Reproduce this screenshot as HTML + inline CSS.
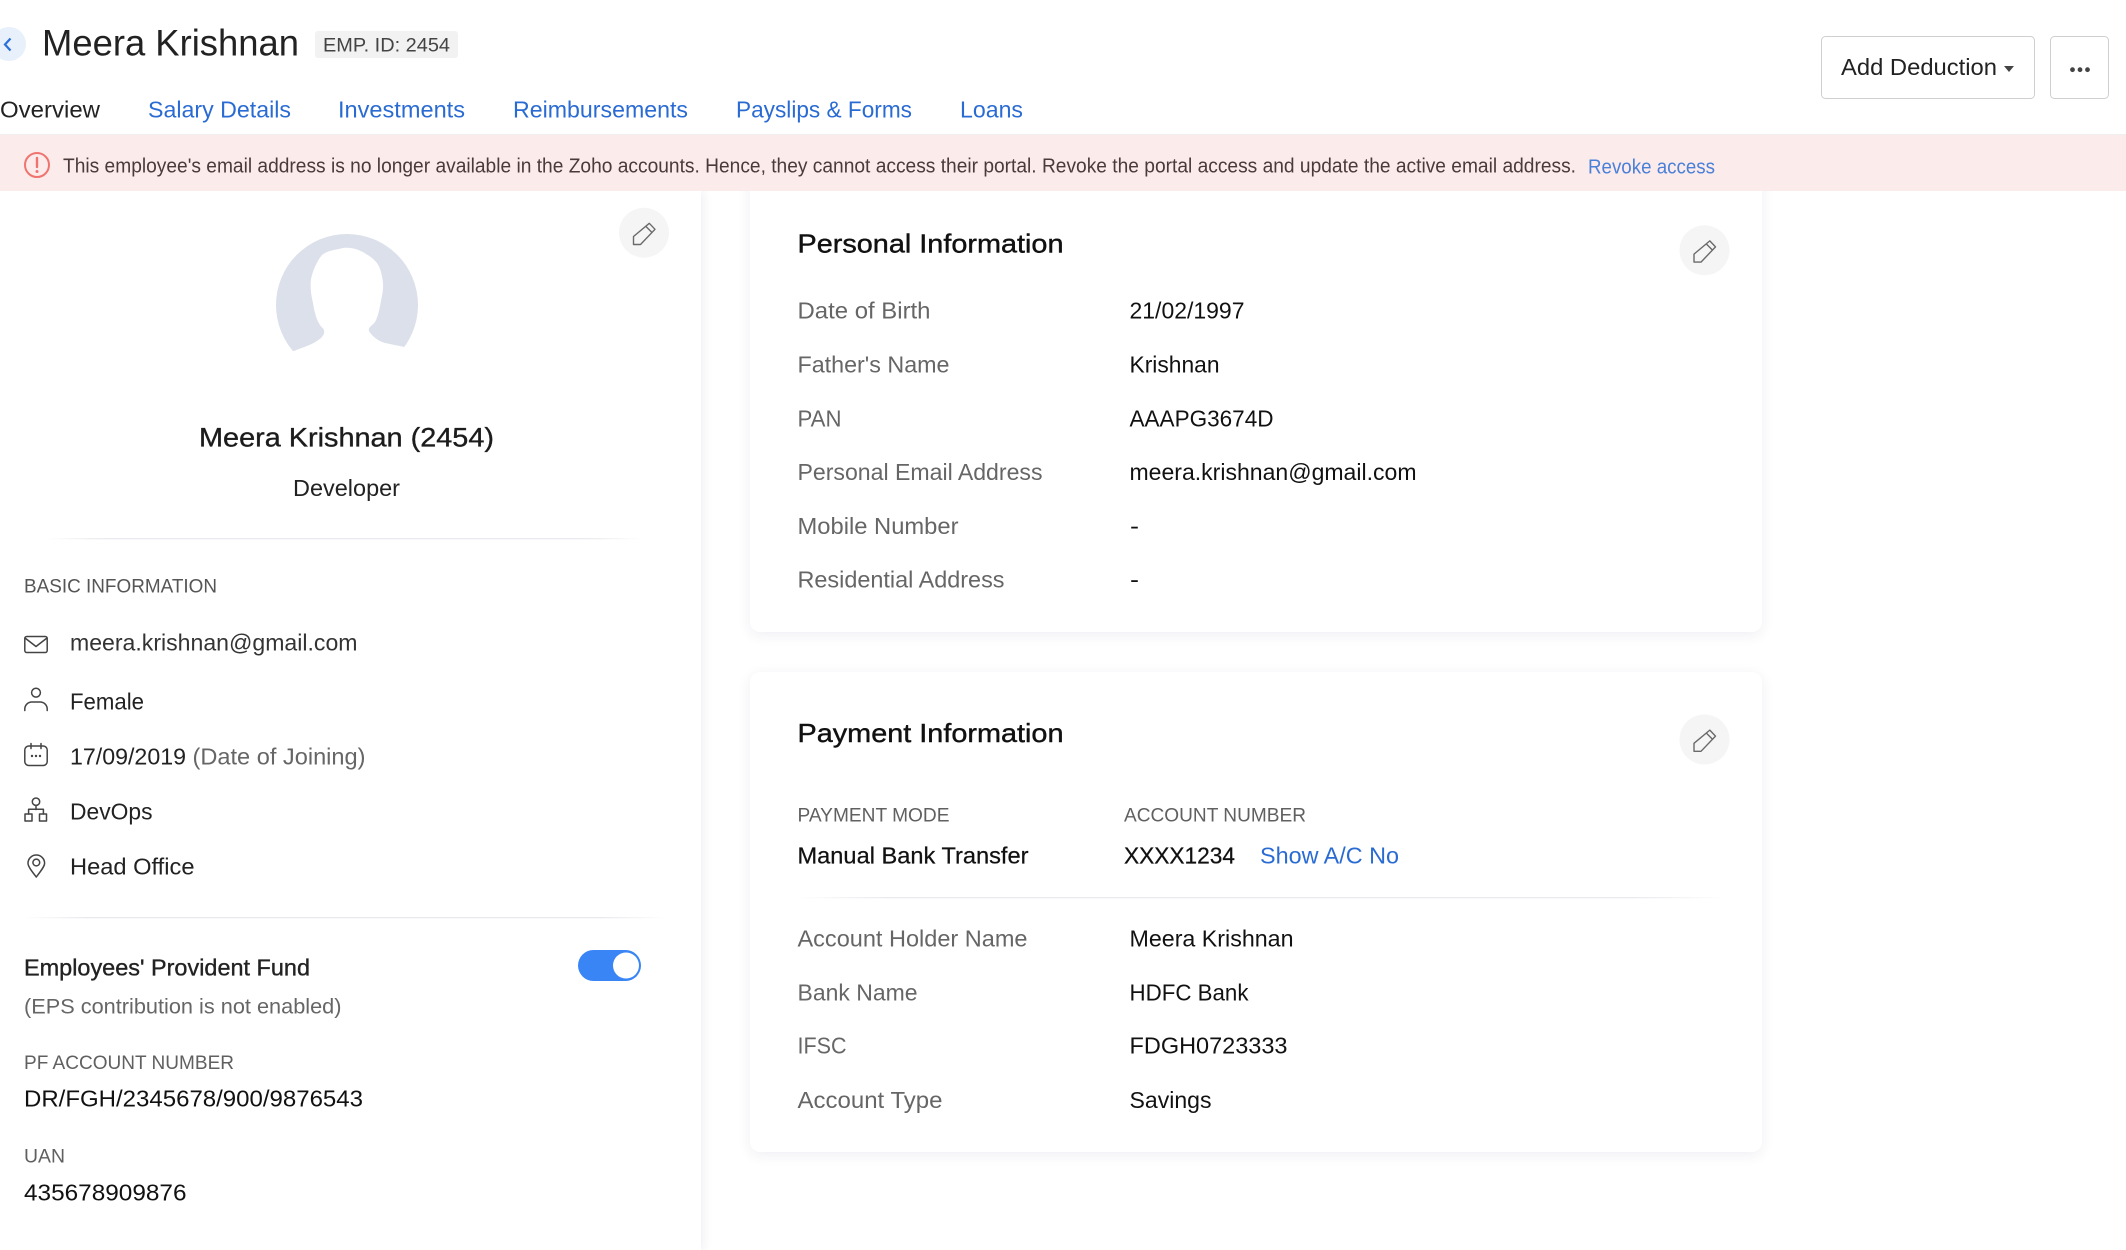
<!DOCTYPE html>
<html lang="en">
<head>
<meta charset="utf-8">
<title>Meera Krishnan</title>
<style>
html,body{margin:0;padding:0;background:#fff;width:2126px;height:1250px;overflow:hidden}
.sidebar{position:absolute;left:0;top:191px;width:701px;height:1059px;background:#fff;box-shadow:2px 0 10px rgba(40,40,90,.08)}
.card{position:absolute;left:750px;width:1012px;background:#fff;border-radius:10px;box-shadow:0 3px 14px rgba(40,40,90,.075)}
.banner{position:absolute;left:0;top:135px;width:2126px;height:56px;background:#fcebeb;box-shadow:0 -1px 0 #efefef}
svg{position:absolute;left:0;top:0}
text{font-family:"Liberation Sans",sans-serif;font-size:23px;fill:#111}
.l{fill:#666}
.c{font-size:19.5px;fill:#606060}
.t{fill:#2a6bd3;font-size:23px}
.a{font-size:20px;fill:#4a3a3a}
.m{stroke:#111;stroke-width:.45}
.i{fill:none;stroke:#444;stroke-width:1.5;stroke-linejoin:round;stroke-linecap:round}
</style>
</head>
<body>
<div class="card" style="top:150px;height:482px"></div>
<div class="card" style="top:672px;height:480px"></div>
<div class="sidebar"></div>
<div class="banner"></div>
<svg width="2126" height="1250" viewBox="0 0 2126 1250" xmlns="http://www.w3.org/2000/svg">
<defs>
<linearGradient id="fade" x1="0" x2="1" y1="0" y2="0">
<stop offset="0" stop-color="#e9e9ee" stop-opacity="0"/>
<stop offset=".1" stop-color="#e9e9ee"/>
<stop offset=".9" stop-color="#e9e9ee"/>
<stop offset="1" stop-color="#e9e9ee" stop-opacity="0"/>
</linearGradient>
<g id="pen">
<circle r="25" fill="#f5f5f5"/>
<path d="M-10.5 11.800V3.800L5.300-9.400 11-3.400-3.500 11.800ZM2-6.200 8-.2" fill="none" stroke="#6a6a6a" stroke-width="1.4" stroke-linejoin="round"/>
</g>
</defs>

<!-- header -->
<circle cx="9" cy="44" r="17" fill="#e8f0fb"/>
<path d="M10.500 38.500 5 44.500l5.500 6" fill="none" stroke="#2a6fdb" stroke-width="2.2"/>
<text x="42" y="55.500" style="font-size:37px;fill:#222" textLength="257" lengthAdjust="spacingAndGlyphs">Meera Krishnan</text>
<rect x="315" y="31" width="143" height="27" rx="3" fill="#f2f2f2"/>
<text x="323" y="51.500" style="font-size:19.500px;fill:#444" textLength="127" lengthAdjust="spacingAndGlyphs">EMP. ID: 2454</text>

<rect x="1821.500" y="36.500" width="213" height="62" rx="4" fill="#fff" stroke="#cfcfcf"/>
<text x="1841" y="75" style="fill:#222" textLength="156" lengthAdjust="spacingAndGlyphs">Add Deduction</text>
<path d="M2004 66h10l-5 6z" fill="#444"/>
<rect x="2050.500" y="36.500" width="58" height="62" rx="4" fill="#fff" stroke="#cfcfcf"/>
<circle cx="2072.500" cy="69.700" r="2.400" fill="#444"/><circle cx="2080" cy="69.700" r="2.400" fill="#444"/><circle cx="2087.500" cy="69.700" r="2.400" fill="#444"/>

<!-- tabs -->
<text x="0" y="117.500" textLength="100" lengthAdjust="spacingAndGlyphs" style="fill:#222">Overview</text>
<text class="t" x="148" y="117.500" textLength="143" lengthAdjust="spacingAndGlyphs">Salary Details</text>
<text class="t" x="338" y="117.500" textLength="127" lengthAdjust="spacingAndGlyphs">Investments</text>
<text class="t" x="513" y="117.500" textLength="175" lengthAdjust="spacingAndGlyphs">Reimbursements</text>
<text class="t" x="736" y="117.500" textLength="176" lengthAdjust="spacingAndGlyphs">Payslips &amp; Forms</text>
<text class="t" x="960" y="117.500" textLength="63" lengthAdjust="spacingAndGlyphs">Loans</text>

<!-- banner -->
<circle cx="37" cy="165" r="12" fill="none" stroke="#ef7470" stroke-width="2"/>
<path d="M37 158v9" stroke="#ef7470" stroke-width="2.400" stroke-linecap="round"/>
<circle cx="37" cy="171.500" r="1.500" fill="#ef7470"/>
<text class="a" x="63" y="172.500" textLength="1513" lengthAdjust="spacingAndGlyphs">This employee's email address is no longer available in the Zoho accounts. Hence, they cannot access their portal. Revoke the portal access and update the active email address.</text>
<text x="1588" y="173.500" style="font-size:20px;fill:#4a80d8" textLength="127" lengthAdjust="spacingAndGlyphs">Revoke access</text>

<!-- sidebar -->
<use href="#pen" x="644" y="232.700"/>
<circle cx="347" cy="305" r="71" fill="#dce0ea"/>
<path d="M280 352 294 351C303 347 313 345 321 338 324 335 325 332 323.500 329 318 324 315 316 313 303 311 295 310 287 311 279 313 270 317 261 322 255 328 250 336 250 343 248 352 247 360 250 366 254 373 258 379 263 381 272 383 280 384 286 382 296 380 305 379 315 375 322 372 326 368 327 369 331 371 335 377 340 382 342 388 344 396 345 404 347L425 343V385H270V352Z" fill="#fff"/>
<text x="199" y="446.500" class="m" style="font-size:27px;stroke-width:.35;fill:#1c1c1c;stroke:#1c1c1c" textLength="295" lengthAdjust="spacingAndGlyphs">Meera Krishnan (2454)</text>
<text x="293" y="496" textLength="107" lengthAdjust="spacingAndGlyphs" style="fill:#222">Developer</text>
<rect x="46" y="538" width="597" height="1.300" fill="url(#fade)"/>
<text class="c" x="24" y="592.500" textLength="193" lengthAdjust="spacingAndGlyphs" style="fill:#555">BASIC INFORMATION</text>

<!-- icons -->
<rect class="i" x="24.800" y="636.500" width="22.400" height="16" rx="2"/>
<path class="i" d="M25 638 36 646.500 47 638"/>
<circle class="i" cx="36" cy="692.700" r="4.400"/>
<path class="i" d="M24.800 710.500v-1.500a7 7 0 0 1 7-7h8.400a7 7 0 0 1 7 7v1.500"/>
<rect class="i" x="24.800" y="746" width="22.400" height="19.500" rx="4"/>
<path class="i" d="M31 743.500v5M41 743.500v5"/>
<g fill="#444"><circle cx="32" cy="756" r="1.200"/><circle cx="36" cy="756" r="1.200"/><circle cx="40" cy="756" r="1.200"/></g>
<circle class="i" cx="36" cy="801.700" r="3.700"/>
<path class="i" d="M36 805.500v4M28.600 814v-4.700h14.800v4.700"/>
<rect class="i" x="25" y="814" width="7" height="7"/>
<rect class="i" x="39.500" y="814" width="7" height="7"/>
<path class="i" d="M36.300 877C32 871.500 28 866.500 28 863.300a8.300 8.300 0 0 1 16.600 0C44.600 866.500 40.500 871.500 36.300 877Z"/>
<circle class="i" cx="36.300" cy="862.500" r="3.400"/>

<text x="70" y="650.700" textLength="287.500" lengthAdjust="spacingAndGlyphs" style="fill:#333">meera.krishnan@gmail.com</text>
<text x="70" y="709.500" textLength="74" lengthAdjust="spacingAndGlyphs" style="fill:#222">Female</text>
<text x="70" y="764.700" textLength="116" lengthAdjust="spacingAndGlyphs" style="fill:#222">17/09/2019</text>
<text x="192.500" y="764.700" textLength="173" lengthAdjust="spacingAndGlyphs" style="fill:#666">(Date of Joining)</text>
<text x="70" y="819.500" textLength="82.500" lengthAdjust="spacingAndGlyphs" style="fill:#222">DevOps</text>
<text x="70" y="874.300" textLength="124.500" lengthAdjust="spacingAndGlyphs" style="fill:#222">Head Office</text>
<rect x="24" y="917" width="642" height="1.300" fill="url(#fade)"/>

<text x="24" y="975.300" class="m" style="fill:#222;stroke:#222;stroke-width:.35" textLength="286" lengthAdjust="spacingAndGlyphs">Employees' Provident Fund</text>
<text x="24" y="1013.300" class="l" style="font-size:21px" textLength="317.500" lengthAdjust="spacingAndGlyphs">(EPS contribution is not enabled)</text>
<rect x="578" y="950" width="63" height="31" rx="15.500" fill="#3a85f5"/>
<circle cx="626" cy="965.500" r="13" fill="#fff"/>
<text class="c" x="24" y="1069" textLength="210" lengthAdjust="spacingAndGlyphs">PF ACCOUNT NUMBER</text>
<text x="24" y="1106.700" textLength="339" lengthAdjust="spacingAndGlyphs">DR/FGH/2345678/900/9876543</text>
<text class="c" x="24" y="1162.700" textLength="41" lengthAdjust="spacingAndGlyphs">UAN</text>
<text x="24" y="1200.700" textLength="162.500" lengthAdjust="spacingAndGlyphs">435678909876</text>

<!-- personal information -->
<text x="797.500" y="252.700" class="m" style="font-size:26px;stroke-width:.4" textLength="266" lengthAdjust="spacingAndGlyphs">Personal Information</text>
<use href="#pen" x="1704.500" y="250.300"/>
<text class="l" x="797.500" y="318.700" textLength="133" lengthAdjust="spacingAndGlyphs">Date of Birth</text>
<text class="l" x="797.500" y="372.700" textLength="152" lengthAdjust="spacingAndGlyphs">Father's Name</text>
<text class="l" x="797.500" y="426.700" textLength="44" lengthAdjust="spacingAndGlyphs">PAN</text>
<text class="l" x="797.500" y="480" textLength="245" lengthAdjust="spacingAndGlyphs">Personal Email Address</text>
<text class="l" x="797.500" y="534" textLength="161" lengthAdjust="spacingAndGlyphs">Mobile Number</text>
<text class="l" x="797.500" y="587.700" textLength="207" lengthAdjust="spacingAndGlyphs">Residential Address</text>
<text x="1129.500" y="318.700" textLength="115" lengthAdjust="spacingAndGlyphs">21/02/1997</text>
<text x="1129.500" y="372.700" textLength="90" lengthAdjust="spacingAndGlyphs">Krishnan</text>
<text x="1129.500" y="426.700" textLength="144" lengthAdjust="spacingAndGlyphs">AAAPG3674D</text>
<text x="1129.500" y="480" textLength="287" lengthAdjust="spacingAndGlyphs">meera.krishnan@gmail.com</text>
<text x="1130" y="534" textLength="9" lengthAdjust="spacingAndGlyphs">-</text>
<text x="1130" y="587.700" textLength="9" lengthAdjust="spacingAndGlyphs">-</text>

<!-- payment information -->
<text x="797.500" y="742" class="m" style="font-size:26px;stroke-width:.4" textLength="266" lengthAdjust="spacingAndGlyphs">Payment Information</text>
<use href="#pen" x="1704.500" y="739.500"/>
<text class="c" x="797.500" y="821.700" textLength="152" lengthAdjust="spacingAndGlyphs">PAYMENT MODE</text>
<text class="c" x="1124" y="821.700" textLength="182" lengthAdjust="spacingAndGlyphs">ACCOUNT NUMBER</text>
<text x="797.500" y="863.300" class="m" style="stroke-width:.25" textLength="231" lengthAdjust="spacingAndGlyphs">Manual Bank Transfer</text>
<text x="1124" y="863.300" class="m" style="stroke-width:.25" textLength="111" lengthAdjust="spacingAndGlyphs">XXXX1234</text>
<text class="t" x="1260" y="863.300" textLength="139" lengthAdjust="spacingAndGlyphs">Show A/C No</text>
<rect x="797" y="897" width="928" height="1.300" fill="url(#fade)"/>
<text class="l" x="797.500" y="946.700" textLength="230" lengthAdjust="spacingAndGlyphs">Account Holder Name</text>
<text class="l" x="797.500" y="1000.700" textLength="120" lengthAdjust="spacingAndGlyphs">Bank Name</text>
<text class="l" x="797.500" y="1053.700" textLength="49" lengthAdjust="spacingAndGlyphs">IFSC</text>
<text class="l" x="797.500" y="1108" textLength="145" lengthAdjust="spacingAndGlyphs">Account Type</text>
<text x="1129.500" y="946.700" textLength="164" lengthAdjust="spacingAndGlyphs">Meera Krishnan</text>
<text x="1129.500" y="1000.700" textLength="119" lengthAdjust="spacingAndGlyphs">HDFC Bank</text>
<text x="1129.500" y="1053.700" textLength="158" lengthAdjust="spacingAndGlyphs">FDGH0723333</text>
<text x="1129.500" y="1108" textLength="82" lengthAdjust="spacingAndGlyphs">Savings</text>
</svg>
</body>
</html>
